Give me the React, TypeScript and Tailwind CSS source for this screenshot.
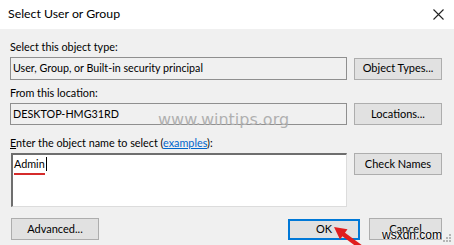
import React from "react";

const Btn: React.FC<{ label: React.ReactNode; className?: string }> = ({ label, className = "" }) => (
  <button
    className={`h-[22px] bg-[#e1e1e1] border border-solid border-[#adadad] text-[11px] text-black flex items-center justify-center ${className}`}
  >
    {label}
  </button>
);

const App: React.FC = () => {
  return (
    <div className="relative w-[454px] h-[245px] overflow-hidden bg-[#f0f0f0] font-['Lato',sans-serif] text-black">
      <div className="title h-[29px] bg-white flex items-center justify-between pl-[8px] pr-[10px]">
        <span className="text-[12.3px]">Select User or Group</span>
        <svg width="11" height="11" viewBox="0 0 11 11" className="w-[11px] h-[11px]">
          <path d="M0.5 0.5 L10.5 10.5 M10.5 0.5 L0.5 10.5" stroke="#222" strokeWidth="1.1" fill="none" />
        </svg>
      </div>

      <div className="body flex flex-col pl-[10px] pr-[12px] pt-[11px]">
        <div className="h-[14px] text-[10.8px] leading-[14px]">Select this object type:</div>
        <div className="flex items-center gap-[7px] mt-[3px]">
          <div className="flex-1 h-[23px] border border-solid border-[#8f8f8f] flex items-center px-[2px] text-[10.7px]">
            User, Group, or Built-in security principal
          </div>
          <Btn label="Object Types..." className="w-[88px] h-[21px]" />
        </div>

        <div className="h-[14px] text-[10.8px] leading-[14px] mt-[6px]">From this location:</div>
        <div className="flex items-center gap-[7px] mt-[3px]">
          <div className="flex-1 h-[22px] border border-solid border-[#8f8f8f] flex items-center px-[2px] text-[10.8px]">
            DESKTOP-HMG31RD
          </div>
          <Btn label="Locations..." className="w-[88px] h-[21px]" />
        </div>

        <div className="h-[14px] text-[10.8px] leading-[14px] mt-[11px]">
          <span className="underline">E</span>nter the object name to select (
          <span className="text-[#0066cc] underline">examples</span>):
        </div>
        <div className="flex items-start gap-[7px] mt-[3px]">
          <div className="flex-1 h-[54px] bg-white border-solid border-t-[2px] border-l-[2px] border-r border-b border-t-[#6e6e6e] border-l-[#6e6e6e] border-r-[#dcdcdc] border-b-[#dcdcdc] pl-[1px] pt-[1px] ml-[1px]">
            <div className="flex items-center text-[10.8px] leading-[16px]">
              <span className="relative">
                Admin
                <span className="absolute left-0 right-0 -bottom-[3px] h-[2px] bg-[#d52b2b]" />
              </span>
              <span className="w-[1px] h-[14px] bg-black ml-[1px]" />
            </div>
          </div>
          <Btn label="Check Names" className="w-[88px] h-[21px]" />
        </div>

        <div className="flex items-center mt-[11px]">
          <Btn label="Advanced..." className="w-[88px] ml-[1px]" />
          <div className="flex-1" />
          <button className="w-[72px] h-[21px] bg-[#e1e1e1] border-2 border-solid border-[#0078d7] text-[11px] flex items-center justify-center">
            OK
          </button>
          <Btn label="Cancel" className="w-[73px] ml-[9px]" />
        </div>
      </div>

      <div className="watermark absolute left-[158px] top-[112px] text-[16px] leading-none font-['DejaVu_Sans',sans-serif] text-[#b0b0b0] pointer-events-none">
        www.wintips.org
      </div>

      <svg className="absolute left-0 top-0 pointer-events-none" width="454" height="245" viewBox="0 0 454 245">
        <polygon points="334,227 347.5,229.2 340,239.5" fill="#e01e1e" />
        <line x1="343" y1="234" x2="362" y2="248" stroke="#e01e1e" strokeWidth="4.5" />
        <g fill="#b5b5b5">
          <rect x="449" y="234" width="2" height="2" />
          <rect x="446" y="237" width="2" height="2" />
          <rect x="449" y="237" width="2" height="2" />
          <rect x="443" y="240" width="2" height="2" />
          <rect x="446" y="240" width="2" height="2" />
          <rect x="449" y="240" width="2" height="2" />
        </g>
      </svg>

      <div className="absolute left-[382px] top-[228px] text-[12px] leading-[14px] font-['Liberation_Sans',sans-serif] text-black [text-shadow:0_0_2px_#fff,0_0_2px_#fff]">
        wsxdn.com
      </div>
    </div>
  );
};

export default App;
